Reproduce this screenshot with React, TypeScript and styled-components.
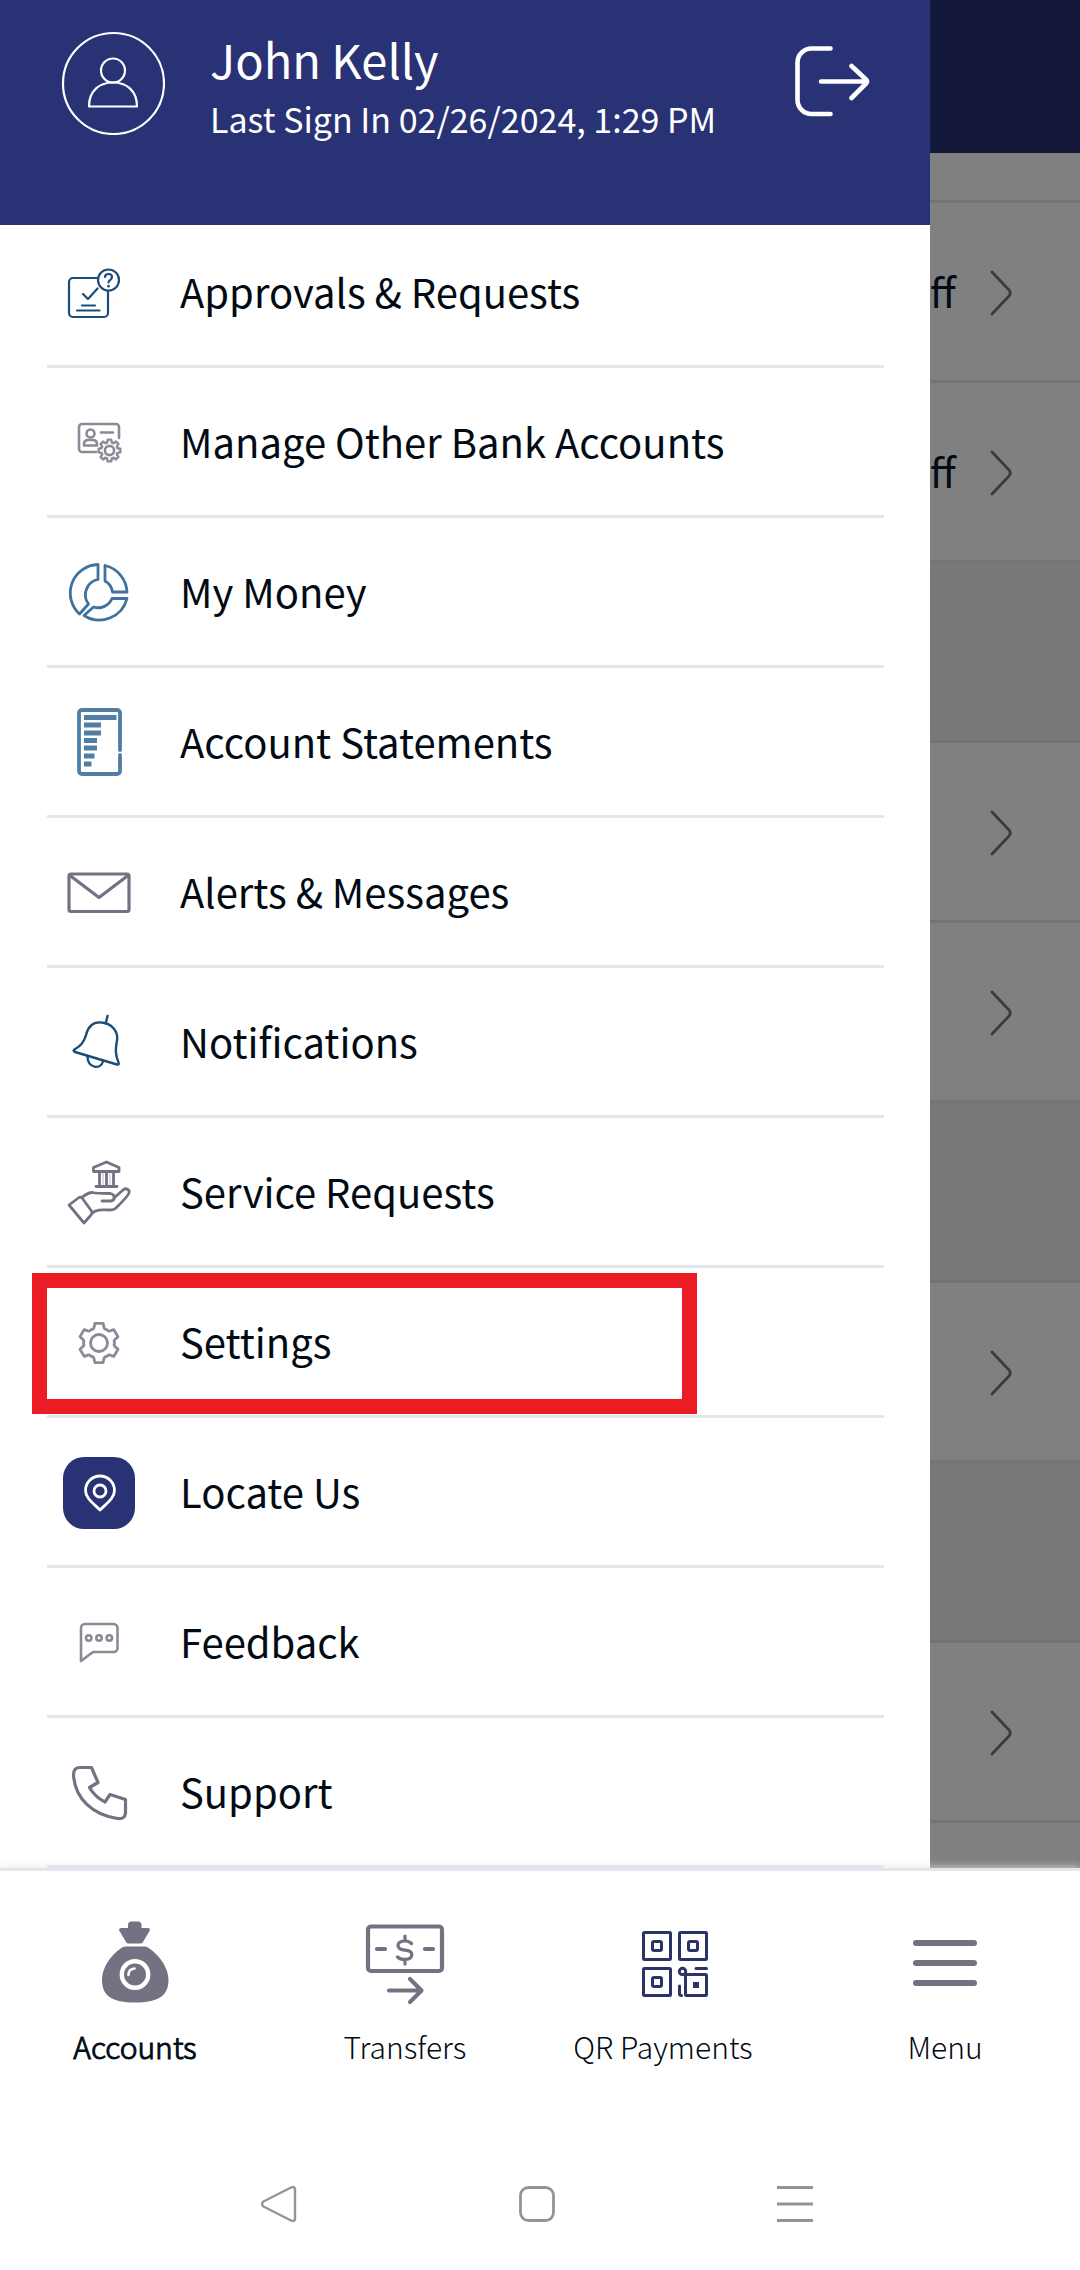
import React from 'react';
import styled, { createGlobalStyle, css } from 'styled-components';

const color = {
  brand: '#293275',
  brandDim: '#151939',
  ink: '#020b14',
  rule: '#e3e7ed',
  slate: '#727283',
  mist: '#8b8a97',
  blue: '#1c4c78',
  steel: '#3f729c',
  navy: '#2b3467',
  alert: '#ec1c24',
};

const GlobalStyle = createGlobalStyle`
  *, *::before, *::after { box-sizing: border-box; }
  body {
    margin: 0;
    background: #fff;
    color: ${color.ink};
    font-family: "Noto Sans CJK SC", "Noto Sans", sans-serif;
  }
  button { font: inherit; color: inherit; border: 0; background: none; padding: 0; margin: 0; cursor: pointer; }
  svg { display: block; flex: none; }
`;

const Screen = styled.div`
  display: flex;
  flex-direction: column;
  min-height: 100vh;
`;

const Main = styled.div`
  display: grid;
  grid-template-columns: minmax(0, 1fr) 150px;
`;

/* Drawer */
const Drawer = styled.aside`
  display: flex;
  flex-direction: column;
  background: #fff;
`;

const DrawerHeader = styled.header`
  position: relative;
  z-index: 1;
  display: flex;
  align-items: flex-start;
  height: 225px;
  padding: 31px 60px 0 61px;
  background: ${color.brand};
  color: #fff;
`;

const Profile = styled.div`
  flex: 1;
  margin-left: 45px;
`;

const UserName = styled.h1`
  margin: 0 0 8px;
  font-size: 47px;
  line-height: 56px;
  font-weight: 400;
`;

const SignIn = styled.p`
  margin: 0;
  font-size: 34px;
  line-height: 48px;
`;

const SignOut = styled.button`
  padding-top: 14px;
`;

const MenuList = styled.ul`
  list-style: none;
  margin: -7px 46px 0 47px;
  padding: 0;
`;

const MenuItem = styled.li`
  position: relative;
  border-bottom: 3px solid ${color.rule};
`;

const MenuButton = styled.button`
  display: flex;
  align-items: center;
  gap: 45px;
  width: 100%;
  height: 147px;
  padding: 3px 0 0 16px;
  text-align: left;
`;

const MenuLabel = styled.span`
  padding-bottom: 4px;
  font-size: 40px;
  line-height: 56px;
`;

const Highlight = styled.div`
  position: absolute;
  top: 5px;
  left: -15px;
  right: 187px;
  height: 141px;
  z-index: 1;
  border: 15px solid ${color.alert};
  pointer-events: none;
`;

/* Dimmed page that shows beside the drawer */
const Behind = styled.div`
  display: flex;
  flex-direction: column;
  background: #808080;
`;

const BehindHeader = styled.div`
  height: 153px;
  background: ${color.brandDim};
`;

const BehindRow = styled.div<{ $kind: 'row' | 'strip' | 'gap' | 'rest' }>`
  display: flex;
  align-items: center;
  justify-content: flex-end;
  height: 180px;
  padding: 3px 67px 0 0;
  border-bottom: 3px solid #717478;
  ${(p) => p.$kind === 'strip' && css`height: 50px;`}
  ${(p) => p.$kind === 'gap' && css`background: #787878; border-color: #727272;`}
  ${(p) => p.$kind === 'rest' && css`flex: 1; height: auto; border: 0;`}
`;

const RowText = styled.span`
  flex: 1;
  padding-bottom: 4px;
  font-size: 40px;
  line-height: 56px;
`;

/* Bottom navigation */
const BottomNav = styled.nav`
  position: relative;
  z-index: 2;
  display: grid;
  grid-template-columns: repeat(4, 1fr);
  padding-top: 47px;
  border-top: 3px solid ${color.rule};
  background: #fff;
  box-shadow: 0 -1px 8px rgba(226, 229, 234, 0.8);
`;

const NavButton = styled.button`
  display: flex;
  flex-direction: column;
  align-items: center;
  gap: 18px;
`;

const NavLabel = styled.span<{ $active?: boolean; $trail?: boolean }>`
  font-size: 30px;
  line-height: 40px;
  font-weight: 300;
  -webkit-text-stroke: ${(p) => (p.$active ? '1px currentColor' : '0')};
  padding-right: ${(p) => (p.$trail ? '24px' : '0')};
`;

const SystemBar = styled.div`
  position: relative;
  z-index: 3;
  flex: 1;
  display: flex;
  justify-content: center;
  align-items: flex-end;
  padding: 0 6px 46px 0;
  background: #fff;
`;

const SystemButton = styled.button`
  display: flex;
  justify-content: center;
  width: 258px;
`;

type StrokeProps = { size?: number; stroke: string; width: number; children: React.ReactNode };

const Line = ({ size = 72, stroke, width, children }: StrokeProps) => (
  <svg
    width={size}
    height={size}
    viewBox={`0 0 ${size} ${size}`}
    fill="none"
    stroke={stroke}
    strokeWidth={width}
    strokeLinecap="round"
    strokeLinejoin="round"
    aria-hidden="true"
  >
    {children}
  </svg>
);

/* Outline of a cog with scalloped valleys, the first tooth pointing up. */
function cog(cx: number, cy: number, outer: number, root: number, teeth: number) {
  const step = 360 / teeth;
  const at = (r: number, n: number) => {
    const a = ((n * step - 90) * Math.PI) / 180;
    return `${(cx + r * Math.cos(a)).toFixed(2)} ${(cy + r * Math.sin(a)).toFixed(2)}`;
  };
  let d = '';
  for (let i = 0; i < teeth; i++) {
    d += `${i ? 'L' : 'M'}${at(outer, i - 0.2)} L${at(outer, i + 0.2)} L${at(root + 1, i + 0.29)} Q${at(root - 1, i + 0.38)} ${at(root, i + 0.44)} L${at(root, i + 0.56)} Q${at(root - 1, i + 0.62)} ${at(root + 1, i + 0.71)} `;
  }
  return d + 'Z';
}

const ApprovalsIcon = () => (
  <Line stroke={color.blue} width={2.2}>
    <path d="M34 21H10a4 4 0 0 0-4 4v31a4 4 0 0 0 4 4h31a4 4 0 0 0 4-4V34" />
    <circle cx="45.5" cy="23" r="10.5" />
    <path d="M20 37l5 5 9.500-10.500M19 48.500h13M14 53.500h22.500" />
    <path d="M42 20c0-4 7-4 7 0 0 3-3.500 3-3.500 5.500" />
    <path d="M45.500 29v.2" strokeWidth="2.600" />
  </Line>
);

const ManageIcon = () => (
  <Line stroke={color.mist} width={2.6}>
    <path d="M56 31V20a3 3 0 0 0-3-3H19a3 3 0 0 0-3 3v22a3 3 0 0 0 3 3h14M38 25.500h12" />
    <circle cx="27.500" cy="26.500" r="4" />
    <path d="M21 38.500v-1.500q0-4 4.500-4h4q4.500 0 4.500 4v1.500z" />
    <path d={cog(46.5, 43.5, 11, 8.5, 8)} strokeWidth="2.400" />
    <circle cx="46.500" cy="43.500" r="4.600" />
  </Line>
);

const MoneyIcon = () => (
  <Line stroke={color.steel} width={2.8}>
    <path d="M35 7.500A28.500 28.500 0 0 0 16.500 57L25.500 47A15.500 15.500 0 0 1 35 22.500Z" />
    <path d="M42 8.500A28.500 28.500 0 0 1 64 35H49.500A15 15 0 0 0 42 24Z" />
    <path d="M64 41.500A28.500 28.500 0 0 1 21 58.500L30.500 50A15 15 0 0 0 49 41.500Z" />
  </Line>
);

const StatementIcon = () => (
  <Line stroke="#527ea4" width={3.8}>
    <path d="M57 43V6a3 3 0 0 0-3-3H19a3 3 0 0 0-3 3v58a3 3 0 0 0 3 3h35a3 3 0 0 0 3-3V48" />
    <path
      strokeLinecap="butt"
      strokeWidth="5"
      d="M21 10.500h32.500M21 18h17M21 26h17M21 33.500h13M21 41h13M21 49h10.500M21 57h7.500"
    />
  </Line>
);

const MailIcon = () => (
  <Line stroke={color.slate} width={3.2}>
    <rect x="6" y="17" width="60" height="37.500" rx="2" />
    <path d="M7 18.500l29 22 29-22" />
  </Line>
);

const BellIcon = () => (
  <Line stroke={color.blue} width={2.4}>
    <path d="M44.500 9l-1.800 7.500" />
    <path d="M38.500 15.500C30 14.500 25 20 23 28c-2 8-6 11-11.500 14.500q-2 1.500.5 2.500l42 12.500q2.500.500 1.500-2C52 47 52.500 42 54 33.500 55.500 25 49.500 16.500 38.500 15.500z" />
    <path d="M24.500 50C25 61 37.500 63 40 54.500" />
  </Line>
);

const ServiceIcon = () => (
  <Line stroke={color.slate} width={2.8}>
    <path d="M30.500 14.500v-4L43.500 5l12.500 5.500v4zM33 29.500h21M36.500 15v14M43.500 15v14M50.500 15v14" />
    <path d="M6 48l10-7.500q2-1 3.500 1l9 12.500q1.500 2-.5 4l-7 8z" />
    <path d="M18.500 40.500c4-3 7-5 11-5 4 1 6 1 18 1 5 1 5 7 0 7.500H39" />
    <path d="M51 41l9-8c3-3 7 0 6 3-.5 2-7 9-11 13-3 3-4 4-8 4-8 0-12-1-18 3" />
    <path d="M40 15v14M47 15v14" strokeWidth="1" opacity=".5" />
  </Line>
);

const SettingsIcon = () => (
  <Line stroke={color.mist} width={2.8}>
    <path d={cog(36, 36, 20, 15.5, 6)} />
    <circle cx="36" cy="36" r="8.500" />
  </Line>
);

const LocateIcon = () => (
  <Line stroke="#fff" width={2.8}>
    <rect width="72" height="72" rx="21" fill={color.brand} stroke="none" />
    <path d="M37 53C30 46 22.500 41 22.500 33.500a14.500 14.500 0 0 1 29 0C51.500 41 44 46 37 53z" />
    <circle cx="37" cy="34" r="6" />
  </Line>
);

const FeedbackIcon = () => (
  <Line stroke={color.mist} width={2.6}>
    <path d="M18 54V21a4 4 0 0 1 4-4h28.500a4 4 0 0 1 4 4v20a4 4 0 0 1-4 4H30z" />
    <circle cx="25.700" cy="31" r="2.700" />
    <circle cx="36" cy="31" r="2.700" />
    <circle cx="46.300" cy="31" r="2.700" />
  </Line>
);

const PhoneIcon = () => (
  <Line stroke={color.slate} width={3.2}>
    <path d="M17 10.500h11.500l6.500 15-8.500 5Q32 40 42 45l5-7.500 15.500 5V55q0 7.500-8 6.500C30 58 12 42 10.500 18q0-7.500 6.500-7.500z" />
  </Line>
);

const Avatar = () => (
  <Line size={104} stroke="#fff" width={2.2}>
    <circle cx="52.500" cy="52.500" r="50.500" />
    <circle cx="52" cy="39.500" r="12" />
    <path d="M28 75.500C28 59 39 51.500 52 51.500S76 59 76 75.500z" />
  </Line>
);

const SignOutIcon = () => (
  <Line size={75} stroke="#fff" width={4.6}>
    <path d="M35.500 3.500H16.500A14 14 0 0 0 2.500 17.500V55a14 14 0 0 0 14 14H35.500M26 36.500H72M56.500 21L71 34.500q2 2 0 4L56.500 53" />
  </Line>
);

const Chevron = () => (
  <svg width="24" height="48" viewBox="0 0 24 48" fill="none" stroke="#3b3b3b" strokeWidth="2.800" strokeLinecap="round" strokeLinejoin="round" aria-hidden="true">
    <path d="M3 3l17 18q2.500 3 0 6L3 45" />
  </svg>
);

const BagIcon = () => (
  <svg width="90" height="90" viewBox="0 0 90 90" fill={color.slate} aria-hidden="true">
    <path d="M38 10V7q0-3.500 3.500-3.500h6.500q3.500 0 3.500 3.500v3h6.500q3 .5 1.500 3L53 24q-1 1.500-2.500 1.500h-12Q37 25.500 36 24l-6.500-11q-1.500-2.500 1.500-3z" />
    <path d="M35 28.500h20q2 0 4 1.800C70 38 78.500 50 78.500 62 78.500 78 68 84.500 45 84.500S12 78 12 62C12 50 20 38 31 30.300q2-1.800 4-1.800z" />
    <circle cx="45" cy="56.500" r="13.200" fill="none" stroke="#fff" strokeWidth="4.400" />
    <path d="M38.500 57q0-6 6-6.500" fill="none" stroke="#fff" strokeWidth="2.600" strokeLinecap="round" />
  </svg>
);

const TransferIcon = () => (
  <Line size={90} stroke={color.slate} width={4.2}>
    <rect x="8" y="8.500" width="74" height="44.500" rx="3" />
    <path d="M17 31h8M65 31h8M29 72.500h32M50 61l11.500 11.500L50 84" />
    <path strokeWidth="3.200" d="M45 18v5M45 41v5M51.500 25.500Q49 23 45 23c-9 0-9 8-2 8.800l4 .5c7 .8 6.500 9.200-2.500 9.200q-4.500 0-7-2.500" />
  </Line>
);

const QrIcon = () => (
  <Line size={90} stroke={color.navy} width={3}>
    <rect x="13.500" y="14.500" width="27" height="27" rx="1" />
    <rect x="49.500" y="14.500" width="27" height="27" rx="1" />
    <rect x="13.500" y="50.500" width="27" height="27" rx="1" />
    <rect x="22.500" y="23.500" width="9" height="9" rx="1.500" />
    <rect x="58.500" y="23.500" width="9" height="9" rx="1.500" />
    <rect x="22.500" y="59.500" width="9" height="9" rx="1.500" />
    <circle cx="52.500" cy="53.500" r="3.200" />
    <path d="M55.500 56.500h20q1 0 1 1v19q0 1-1 1h-19q-1 0-1-1zM66 50.500h10.500M49.500 68v8q0 1.500 2 1.500" />
    <rect x="63" y="64" width="6" height="6" fill={color.navy} stroke="none" />
  </Line>
);

const BarsIcon = () => (
  <Line size={90} stroke={color.slate} width={6}>
    <path d="M16 25h58M16 45h58M16 65h58" />
  </Line>
);

const menu = [
  { label: 'Approvals & Requests', Icon: ApprovalsIcon },
  { label: 'Manage Other Bank Accounts', Icon: ManageIcon },
  { label: 'My Money', Icon: MoneyIcon },
  { label: 'Account Statements', Icon: StatementIcon },
  { label: 'Alerts & Messages', Icon: MailIcon },
  { label: 'Notifications', Icon: BellIcon },
  { label: 'Service Requests', Icon: ServiceIcon },
  { label: 'Settings', Icon: SettingsIcon, highlighted: true },
  { label: 'Locate Us', Icon: LocateIcon },
  { label: 'Feedback', Icon: FeedbackIcon },
  { label: 'Support', Icon: PhoneIcon },
];

const behind: { kind: 'row' | 'strip' | 'gap' | 'rest'; text?: string }[] = [
  { kind: 'strip' },
  { kind: 'row', text: 'ff' },
  { kind: 'row', text: 'ff' },
  { kind: 'gap' },
  { kind: 'row' },
  { kind: 'row' },
  { kind: 'gap' },
  { kind: 'row' },
  { kind: 'gap' },
  { kind: 'row' },
  { kind: 'rest' },
];

const tabs = [
  { label: 'Accounts', Icon: BagIcon, active: true },
  { label: 'Transfers', Icon: TransferIcon },
  { label: 'QR Payments', Icon: QrIcon, trail: true },
  { label: 'Menu', Icon: BarsIcon },
];

export default function App() {
  return (
    <>
      <GlobalStyle />
      <Screen>
        <Main>
          <Drawer>
            <DrawerHeader>
              <Avatar />
              <Profile>
                <UserName>John Kelly</UserName>
                <SignIn>Last Sign In 02/26/2024, 1:29 PM</SignIn>
              </Profile>
              <SignOut type="button" aria-label="Sign out">
                <SignOutIcon />
              </SignOut>
            </DrawerHeader>
            <MenuList>
              {menu.map(({ label, Icon, highlighted }) => (
                <MenuItem key={label}>
                  <MenuButton type="button">
                    <Icon />
                    <MenuLabel>{label}</MenuLabel>
                  </MenuButton>
                  {highlighted && <Highlight />}
                </MenuItem>
              ))}
            </MenuList>
          </Drawer>
          <Behind>
            <BehindHeader />
            {behind.map(({ kind, text }, i) => (
              <BehindRow key={i} $kind={kind}>
                {text && <RowText>{text}</RowText>}
                {kind === 'row' && <Chevron />}
              </BehindRow>
            ))}
          </Behind>
        </Main>
        <BottomNav>
          {tabs.map(({ label, Icon, active, trail }) => (
            <NavButton key={label} type="button">
              <Icon />
              <NavLabel $active={active} $trail={trail}>{label}</NavLabel>
            </NavButton>
          ))}
        </BottomNav>
        <SystemBar>
          <SystemButton type="button" aria-label="Back">
            <Line size={40} stroke="#949494" width={2.4}>
              <path d="M4.500 17.500L32 3.500q4-1.500 4 2v29q0 3.500-4 2L4.500 22.500q-3-2.500 0-5z" />
            </Line>
          </SystemButton>
          <SystemButton type="button" aria-label="Home">
            <Line size={40} stroke="#949494" width={2.8}>
              <rect x="3.500" y="3.500" width="33" height="33" rx="8" />
            </Line>
          </SystemButton>
          <SystemButton type="button" aria-label="Recent apps">
            <Line size={40} stroke="#949494" width={3}>
              <path strokeLinecap="butt" d="M2 3.500h36M2 20h36M2 36.500h36" />
            </Line>
          </SystemButton>
        </SystemBar>
      </Screen>
    </>
  );
}
